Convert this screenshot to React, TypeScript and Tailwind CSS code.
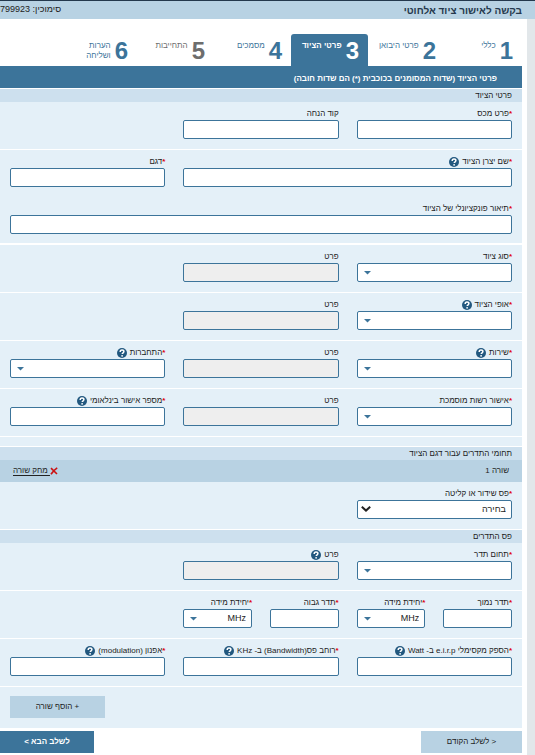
import type { ReactNode } from "react";

interface Step {
  num: number;
  label: string;
  muted?: boolean;
}

const steps: Step[] = [
  { num: 1, label: "כללי" },
  { num: 2, label: "פרטי היבואן" },
  { num: 3, label: "פרטי הציוד" },
  { num: 4, label: "מסמכים" },
  { num: 5, label: "התחייבות", muted: true },
  { num: 6, label: "הערות ושליחה" },
];

const box = "block h-[19px] w-full rounded-[2px] border border-[#3c749a] px-[5px] text-[9px] leading-[17px] text-[#222]";

function HelpIcon() {
  return (
    <button type="button" aria-label="עזרה" className="shrink-0">
      <svg viewBox="0 0 10 10" className="size-[10px]">
        <circle cx="5" cy="5" r="5" fill="#22587f" />
        <path d="M3.2 3.9C3.2 2.7 4 2.1 5 2.1s1.9.6 1.9 1.5c0 1.2-1.7 1.2-1.7 2.5" fill="none" stroke="#fff" strokeWidth="1.5" />
        <circle cx="5.1" cy="7.8" r=".9" fill="#fff" />
      </svg>
    </button>
  );
}

interface FieldProps {
  id: string;
  label: string;
  required?: boolean;
  help?: boolean;
  className?: string;
  children: ReactNode;
}

function Field({ id, label, required, help, className = "", children }: FieldProps) {
  return (
    <div className={className}>
      <div className="flex h-[13px] items-center gap-[3px] whitespace-nowrap">
        <label htmlFor={id} className="leading-3">
          {required && <span className="font-bold text-[#e0000c]">*</span>}
          {label}
        </label>
        {help && <HelpIcon />}
      </div>
      {children}
    </div>
  );
}

type InputProps = Omit<FieldProps, "children"> & { disabled?: boolean };

function TextField({ disabled, ...field }: InputProps) {
  return (
    <Field {...field}>
      <input id={field.id} type="text" disabled={disabled} className={`${box} ${disabled ? "bg-[#eeeeee]" : "bg-white"}`} />
    </Field>
  );
}

function SelectField({ value = "", native, ...field }: InputProps & { value?: string; native?: boolean }) {
  return (
    <Field {...field}>
      <div className="relative">
        <select id={field.id} defaultValue={value} className={`${box} appearance-none bg-white`}>
          <option value={value}>{value}</option>
        </select>
        {native ? (
          <svg viewBox="0 0 10 6" className="pointer-events-none absolute left-1 top-[6px] h-[6px] w-[10px]">
            <path d="M.8.8 5 4.6 9.2.8" fill="none" stroke="#222" strokeWidth="2" />
          </svg>
        ) : (
          <svg viewBox="0 0 7 4" className="pointer-events-none absolute left-[7px] top-2 h-1 w-[7px]">
            <path d="M0 0h7L3.5 3.6z" fill="#3c749a" />
          </svg>
        )}
      </div>
    </Field>
  );
}

function Row({ children }: { children: ReactNode }) {
  return <div className="grid grid-cols-3 gap-x-[18px] border-b border-white px-[10px] pt-[5px] pb-[10px]">{children}</div>;
}

function SectionTitle({ children }: { children: ReactNode }) {
  return <h3 className="h-[13px] bg-[#cde0ee] px-[10px] leading-[13px]">{children}</h3>;
}

export default function App() {
  return (
    <div dir="rtl" className="overflow-hidden bg-white font-['Liberation_Sans',Arial,sans-serif] text-[8px] text-[#222]">
      <header className="flex h-[19px] items-center justify-between border-t border-[#24384c] bg-[#b8d2e3] ps-[13px]">
        <h1 className="text-[10px] font-bold text-[#24384c]">בקשה לאישור ציוד אלחוטי</h1>
        <span className="text-[9px]">סימוכין: 799923</span>
      </header>

      <div className="border-s-8 border-[#e2e7ea] ps-[5px]">
        <nav className="flex h-[47px] items-end">
          {steps.map((s) => {
            const active = s.num === 3;
            return (
              <a
                key={s.num}
                href={`#step-${s.num}`}
                aria-current={active ? "step" : undefined}
                className={`flex h-8 w-[77px] shrink-0 items-start gap-1 ps-[9px] pt-[5px] ${
                  active ? "rounded-t-[3px] bg-[#3c749a] font-bold text-white" : s.muted ? "text-[#6d6d6d]" : "text-[#3c749a]"
                }`}
              >
                <span className="text-2xl leading-6 font-bold">{s.num}</span>
                <span className={`pt-[2px] leading-[10px] ${s.num === 6 ? "w-[28px]" : "whitespace-nowrap"}`}>{s.label}</span>
              </a>
            );
          })}
        </nav>

        <form onSubmit={(e) => e.preventDefault()}>
          <h2 className="mb-px h-[22px] bg-[#3c749a] ps-[25px] leading-[26px] font-bold text-white">
            פרטי הציוד (שדות המסומנים בכוכבית (*) הם שדות חובה)
          </h2>

          <div className="bg-[#e4f0f8]">
            <SectionTitle>פרטי הציוד</SectionTitle>
            <Row>
              <TextField id="customs" label="פרט מכס" required />
              <TextField id="guide" label="קוד הנחה" />
            </Row>
            <div className="grid grid-cols-3 gap-x-[18px] gap-y-[15px] border-b-2 border-white px-[10px] pt-[5px] pb-[9px]">
              <TextField id="maker" label="שם יצרן הציוד" required help className="col-span-2" />
              <TextField id="model" label="דגם" required />
              <TextField id="description" label="תיאור פונקציונלי של הציוד" required className="col-span-3" />
            </div>
            <Row>
              <SelectField id="kind" label="סוג ציוד" required />
              <TextField id="kind-detail" label="פרט" disabled />
            </Row>
            <Row>
              <SelectField id="nature" label="אופי הציוד" required help />
              <TextField id="nature-detail" label="פרט" disabled />
            </Row>
            <Row>
              <SelectField id="service" label="שירות" required help />
              <TextField id="service-detail" label="פרט" disabled />
              <SelectField id="connection" label="התחברות" required help />
            </Row>
            <Row>
              <SelectField id="authority" label="אישור רשות מוסמכת" required />
              <TextField id="authority-detail" label="פרט" disabled />
              <TextField id="approval" label="מספר אישור בינלאומי" required help />
            </Row>
            <div className="h-[10px] border-b border-white" />

            <SectionTitle>תחומי התדרים עבור דגם הציוד</SectionTitle>
            <div className="flex h-[22px] items-center justify-between bg-[#b8d2e3] px-[13px]">
              <span>שורה 1</span>
              <button type="button" className="flex items-center underline underline-offset-2">
                <svg viewBox="0 0 8 8" className="size-2">
                  <path d="M1 1.2 7 7M7.2.8C5 2.2 2.6 4.8 1 7.3" fill="none" stroke="#cc1111" strokeWidth="1.6" />
                </svg>
                <span className="whitespace-pre"> מחק שורה</span>
              </button>
            </div>
            <Row>
              <SelectField id="band" label="פס שידור או קליטה" value="בחירה" required native />
            </Row>

            <SectionTitle>פס התדרים</SectionTitle>
            <Row>
              <SelectField id="range" label="תחום תדר" required />
              <TextField id="range-detail" label="פרט" help disabled />
            </Row>
            <Row>
              <div className="grid grid-cols-2 gap-x-[18px]">
                <TextField id="freq-low" label="תדר נמוך" required />
                <SelectField id="unit-low" label="יחידת מידה" value="MHz" required />
              </div>
              <div className="grid grid-cols-2 gap-x-[18px]">
                <TextField id="freq-high" label="תדר גבוה" required />
                <SelectField id="unit-high" label="יחידת מידה" value="MHz" required />
              </div>
            </Row>
            <Row>
              <TextField id="eirp" label="הספק מקסימלי e.i.r.p ב- Watt" required help />
              <TextField id="bandwidth" label="רוחב פס(Bandwidth) ב- KHz" required help />
              <TextField id="modulation" label="אפנון (modulation)" required help />
            </Row>
            <div className="flex justify-end px-[10px] pt-[9px] pb-[10px]">
              <button type="button" className="h-[22px] w-[95px] bg-[#b8d2e3]">+ הוסף שורה</button>
            </div>
          </div>

          <div className="flex justify-between pt-[3px] pb-[2px]">
            <button type="button" className="h-[22px] w-[101px] bg-[#b8d2e3]">&lt; לשלב הקודם</button>
            <button type="submit" className="h-[22px] w-[94px] bg-[#3c749a] font-bold text-white">לשלב הבא &gt;</button>
          </div>
        </form>
      </div>
    </div>
  );
}
